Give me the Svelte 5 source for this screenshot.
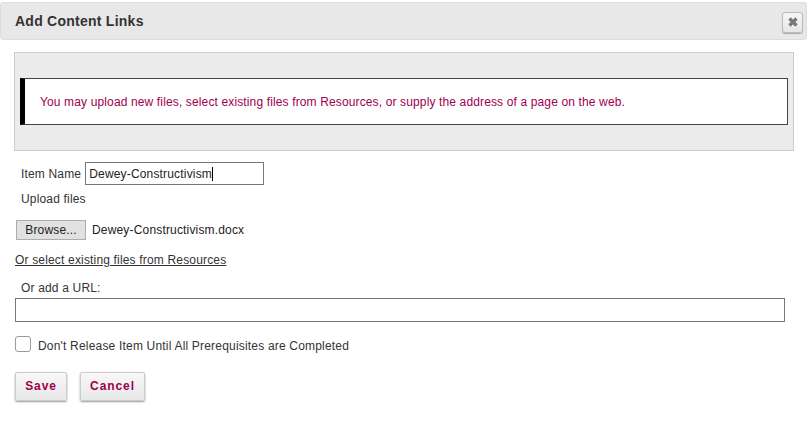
<script>
    let itemName = 'Dewey-Constructivism';
</script>

<div class="dialog">
    <header class="titlebar">
        <h1>Add Content Links</h1>
        <button class="close" aria-label="Close">
            <svg width="12" height="12" viewBox="0 0 12 12">
                <path d="M2.5 2.5 L9.5 9.5 M9.5 2.5 L2.5 9.5" stroke="#777" stroke-width="3.2" fill="none" />
            </svg>
        </button>
    </header>

    <div class="notice">
        <p class="message">You may upload new files, select existing files from Resources, or supply the address of a page on the web.</p>
    </div>

    <div class="name-row">
        <label for="item-name">Item Name</label>
        <div class="fake-input">
            <span>{itemName}</span><span class="caret"></span>
        </div>
    </div>

    <div class="upload-label">Upload files</div>

    <div class="file-row">
        <button class="browse">Browse...</button>
        <span>Dewey-Constructivism.docx</span>
    </div>

    <a class="resources" href="#resources">Or select existing files from Resources</a>

    <label class="url-label" for="url">Or add a URL:</label>
    <input id="url" class="url" type="text" />

    <label class="check-row">
        <span class="check"></span>
        <span class="check-text">Don't Release Item Until All Prerequisites are Completed</span>
    </label>

    <div class="actions">
        <button class="action save">Save</button>
        <button class="action cancel">Cancel</button>
    </div>
</div>

<style>
    :global(body) {
        background: #fff;
    }

    .dialog {
        width: 810px;
        height: 423px;
        box-sizing: border-box;
        padding-top: 2px;
        overflow: hidden;
        font-family: "Liberation Sans", Arial, sans-serif;
        font-size: 12px;
        letter-spacing: 0.17px;
        color: #333;
    }

    .titlebar {
        width: 807px;
        height: 38px;
        box-sizing: border-box;
        display: flex;
        align-items: center;
        justify-content: space-between;
        padding: 0 3px 0 14px;
        background: #e8e8e8;
        border: 1px solid #ddd;
        border-radius: 3px;
    }

    h1 {
        margin: 0;
        font-size: 14px;
        font-weight: bold;
        color: #333;
        letter-spacing: 0.25px;
    }

    .close {
        width: 21px;
        height: 21px;
        margin-top: 2px;
        padding: 0;
        display: flex;
        align-items: center;
        justify-content: center;
        background: linear-gradient(#f6f6f6, #e6e6e6);
        border: 1px solid #bbb;
        border-radius: 3px;
        box-shadow: 0 1px 1px #aaa;
    }

    .notice {
        width: 780px;
        height: 99px;
        box-sizing: border-box;
        margin: 12px 0 0 14px;
        padding: 25px 5px 0;
        background: #ececec;
        border: 1px solid #ccc;
    }

    .message {
        height: 47px;
        box-sizing: border-box;
        margin: 0;
        padding: 0 0 0 15px;
        display: flex;
        align-items: center;
        background: #fff;
        border: 1px solid #444;
        border-left: 5px solid #000;
        color: #a0004f;
        letter-spacing: 0.135px;
    }

    .name-row {
        display: flex;
        align-items: center;
        margin: 11px 0 0 21px;
        height: 23px;
    }

    .name-row label {
        margin-right: 4px;
    }

    .fake-input {
        width: 179px;
        height: 23px;
        box-sizing: border-box;
        display: flex;
        align-items: center;
        padding-left: 3px;
        background: #fff;
        border: 1px solid #777;
        color: #222;
    }

    .caret {
        width: 1px;
        height: 14px;
        background: #000;
    }

    .upload-label {
        margin: 7px 0 0 21px;
        line-height: 14px;
    }

    .file-row {
        display: flex;
        align-items: center;
        gap: 6px;
        margin: 14px 0 0 16px;
        color: #222;
    }

    .browse {
        width: 70px;
        height: 20px;
        padding: 0;
        font-family: inherit;
        font-size: 12px;
        letter-spacing: 0.17px;
        color: #222;
        background: #e1e1e1;
        border: 1px solid #adadad;
    }

    .resources {
        display: block;
        width: max-content;
        margin: 13px 0 0 15px;
        line-height: 14px;
        color: #333;
        text-decoration: underline;
    }

    .url-label {
        display: block;
        margin: 14px 0 0 21px;
        line-height: 14px;
    }

    .url {
        display: block;
        width: 770px;
        height: 24px;
        box-sizing: border-box;
        margin: 3px 0 0 15px;
        border: 1px solid #777;
        background: #fff;
    }

    .check-row {
        display: flex;
        align-items: center;
        gap: 7px;
        margin: 14px 0 0 15px;
        height: 16px;
    }

    .check-text {
        padding-top: 3px;
        letter-spacing: 0.19px;
    }

    .check {
        width: 16px;
        height: 16px;
        box-sizing: border-box;
        background: #fff;
        border: 1px solid #999;
        border-radius: 3px;
    }

    .actions {
        display: flex;
        gap: 13px;
        margin: 20px 0 0 15px;
    }

    .action {
        height: 29px;
        padding: 0 0 2px;
        font-family: inherit;
        font-size: 12px;
        font-weight: bold;
        letter-spacing: 0.9px;
        color: #a0004f;
        background: linear-gradient(#f8f8f8, #e8e8e8);
        border: 1px solid #ccc;
        border-radius: 2px;
        box-shadow: 0 1px 2px #999;
    }

    .save {
        width: 52px;
    }

    .cancel {
        width: 65px;
    }
</style>
